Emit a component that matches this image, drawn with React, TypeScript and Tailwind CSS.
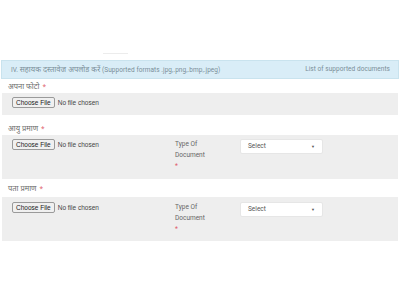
import React from 'react'

const dev = { fontFamily: '"Noto Sans", "Lohit Devanagari", "DejaVu Sans", sans-serif' }

function FileButton() {
  return (
    <div className="flex items-center gap-[3px]" style={{ fontFamily: '"Liberation Sans", Arial, sans-serif' }}>
      <span className="h-[11px] px-[3px] flex items-center border border-[#9a9a9a] rounded-[2px] bg-[#f0f0f0] text-[6.5px] text-[#222]">
        Choose File
      </span>
      <span className="text-[6.5px] text-[#444]">No file chosen</span>
    </div>
  )
}

function DocType() {
  return (
    <div className="flex">
      <div className="w-[65px] text-[6.5px] leading-[11px] text-[#666]" style={{ fontFamily: 'Roboto, sans-serif' }}>
        <div>Type Of</div>
        <div>Document</div>
        <div className="text-[#e05a6a]">*</div>
      </div>
      <div className="w-[83px] h-[15px] bg-white border border-[#e6e6e6] rounded-[2px] flex items-center justify-between px-[7px] text-[6.5px] text-[#555]" style={{ fontFamily: 'Roboto, sans-serif' }}>
        <span>Select</span>
        <span className="text-[4px]">▼</span>
      </div>
    </div>
  )
}

function Label({ text, className }: { text: string; className?: string }) {
  return (
    <div className={`pl-[8px] h-[10px] flex items-center text-[7.5px] text-[#6a6a6a] ${className ?? ''}`} style={dev}>
      {text} <span className="ml-[3px] text-[#e05a6a] text-[6.5px]">*</span>
    </div>
  )
}

export default function App() {
  return (
    <div className="w-[400px] h-[300px] bg-white overflow-hidden">
      <div className="h-[54px] flex items-end">
        <div className="ml-[103px] w-[25px] h-px bg-[#ececec]" />
      </div>
      <div
        className="mt-[6px] mx-[1px] h-[19px] border border-[#c9e3ee] bg-[#d9edf7] flex items-center justify-between pl-[9px] pr-[8px] text-[6.5px] text-[#7a8d98] tracking-[0.05px]"
        style={{ fontFamily: 'Roboto, "Noto Sans", sans-serif' }}
      >
        <span>
          <span>IV. </span>
          <span className="text-[7.5px]" style={dev}>सहायक दस्तावेज अपलोड करें</span>
          <span> (Supported formats .jpg,.png,.bmp,.jpeg)</span>
        </span>
        <span>List of supported documents</span>
      </div>

      <Label text="अपना फोटो" className="mt-[3px]" />
      <div className="mt-[1px] ml-[2px] mr-[2px] h-[22px] bg-[#eeeeee] pl-[10px] pt-[4px]">
        <FileButton />
      </div>

      <Label text="आयु प्रमाण" className="mt-[9px]" />
      <div className="mt-[1px] ml-[2px] mr-[2px] h-[44px] bg-[#eeeeee] pl-[10px] pt-[4px] flex">
        <div className="w-[163px]">
          <FileButton />
        </div>
        <DocType />
      </div>

      <Label text="पता प्रमाण" className="mt-[5px]" />
      <div className="mt-[3px] ml-[2px] mr-[2px] h-[44px] bg-[#eeeeee] pl-[10px] pt-[5px] flex">
        <div className="w-[163px]">
          <FileButton />
        </div>
        <DocType />
      </div>
    </div>
  )
}
